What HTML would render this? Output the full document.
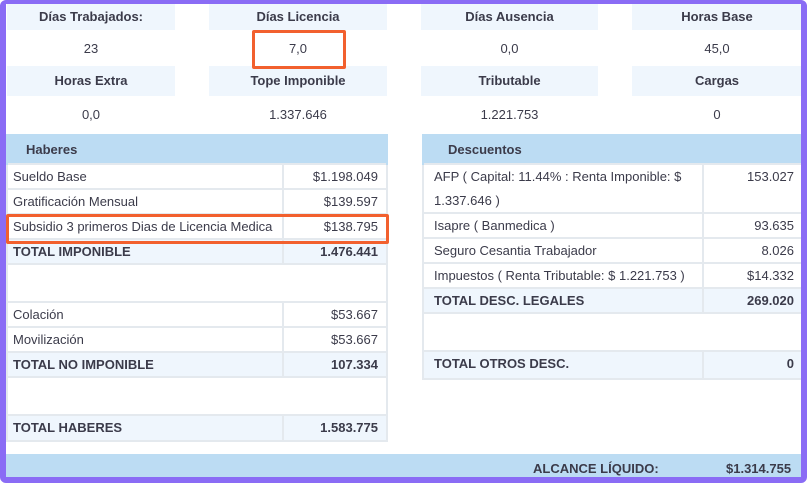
<!DOCTYPE html>
<html><head><meta charset="utf-8"><style>
*{margin:0;padding:0;box-sizing:border-box}
body{width:807px;height:483px;overflow:hidden;background:#fff;font-family:"Liberation Sans",Arial,sans-serif;font-size:13px;color:#3b3b4a;position:relative}
.frame{position:absolute;left:0;top:0;width:807px;height:483px;border:6px solid #8a6cf5;border-top-width:4px;border-radius:6px;z-index:10;pointer-events:none}
.a{position:absolute}
.h{background:#eff6fd;font-weight:bold;text-align:center;line-height:30px}
.v{text-align:center;line-height:37px}
.tbl{position:absolute;border:2px solid #e4e9ee;border-top:none}
.row{position:absolute;left:0;right:0;border-top:2px solid #e4e9ee}
.row .l{position:absolute;left:5px;top:0}
.row .r{position:absolute;right:8px;top:0}
.row .sep{position:absolute;top:0;bottom:0;width:2px;background:#e4e9ee}
.tot{background:#eff6fd;font-weight:bold}
.hd{position:absolute;background:#bcdcf3;font-weight:bold}
.box{position:absolute;border:3px solid #f2602e;border-radius:2px;z-index:5}
</style></head><body>
<div class="frame"></div>
<div class="a h" style="left:7px;top:3px;width:168px;height:27px;line-height:27px">Días Trabajados:</div>
<div class="a h" style="left:209px;top:3px;width:178px;height:27px;line-height:27px">Días Licencia</div>
<div class="a h" style="left:421px;top:3px;width:177px;height:27px;line-height:27px">Días Ausencia</div>
<div class="a h" style="left:632px;top:3px;width:170px;height:27px;line-height:27px">Horas Base</div>
<div class="a v" style="left:7px;top:30px;width:168px">23</div>
<div class="a v" style="left:209px;top:30px;width:178px">7,0</div>
<div class="a v" style="left:421px;top:30px;width:177px">0,0</div>
<div class="a v" style="left:632px;top:30px;width:170px">45,0</div>
<div class="a h" style="left:7px;top:66px;width:168px">Horas Extra</div>
<div class="a h" style="left:209px;top:66px;width:178px">Tope Imponible</div>
<div class="a h" style="left:421px;top:66px;width:177px">Tributable</div>
<div class="a h" style="left:632px;top:66px;width:170px">Cargas</div>
<div class="a v" style="left:7px;top:96px;width:168px">0,0</div>
<div class="a v" style="left:209px;top:96px;width:178px">1.337.646</div>
<div class="a v" style="left:421px;top:96px;width:177px">1.221.753</div>
<div class="a v" style="left:632px;top:96px;width:170px">0</div>
<div class="box" style="left:252px;top:30px;width:94px;height:39px"></div>

<!-- Haberes -->
<div class="hd" style="left:6px;top:134px;width:382px;height:31px;line-height:31px;padding-left:20px">Haberes</div>
<div class="tbl" style="left:6px;top:165px;width:382px;height:277px">
 <div class="row" style="top:-2px;height:26px;line-height:24px"><span class="l">Sueldo Base</span><div class="sep" style="left:274px"></div><span class="r">$1.198.049</span></div>
 <div class="row" style="top:23px;height:26px;line-height:24px"><span class="l">Gratificación Mensual</span><div class="sep" style="left:274px"></div><span class="r">$139.597</span></div>
 <div class="row" style="top:48px;height:26px;line-height:24px"><span class="l">Subsidio 3 primeros Dias de Licencia Medica</span><div class="sep" style="left:274px"></div><span class="r">$138.795</span></div>
 <div class="row tot" style="top:73px;height:26px;line-height:24px"><span class="l">TOTAL IMPONIBLE</span><div class="sep" style="left:274px"></div><span class="r">1.476.441</span></div>
 <div class="row" style="top:98px;height:39px"></div>
 <div class="row" style="top:136px;height:26px;line-height:24px"><span class="l">Colación</span><div class="sep" style="left:274px"></div><span class="r">$53.667</span></div>
 <div class="row" style="top:161px;height:26px;line-height:24px"><span class="l">Movilización</span><div class="sep" style="left:274px"></div><span class="r">$53.667</span></div>
 <div class="row tot" style="top:186px;height:26px;line-height:24px"><span class="l">TOTAL NO IMPONIBLE</span><div class="sep" style="left:274px"></div><span class="r">107.334</span></div>
 <div class="row" style="top:211px;height:39px"></div>
 <div class="row tot" style="top:249px;height:26px;line-height:24px"><span class="l">TOTAL HABERES</span><div class="sep" style="left:274px"></div><span class="r">1.583.775</span></div>
</div>
<div class="box" style="left:6px;top:214px;width:383px;height:30px"></div>

<!-- Descuentos -->
<div class="hd" style="left:422px;top:134px;width:380px;height:31px;line-height:31px;padding-left:26px">Descuentos</div>
<div class="tbl" style="left:422px;top:165px;width:380px;height:215px;border-right:none">
 <div class="row" style="top:-2px;height:50px;line-height:24px"><span class="l" style="left:10px">AFP ( Capital: 11.44% : Renta Imponible: $<br>1.337.646 )</span><div class="sep" style="left:278px"></div><span class="r">153.027</span></div>
 <div class="row" style="top:47px;height:26px;line-height:24px"><span class="l" style="left:10px">Isapre ( Banmedica )</span><div class="sep" style="left:278px"></div><span class="r">93.635</span></div>
 <div class="row" style="top:72px;height:26px;line-height:24px"><span class="l" style="left:10px">Seguro Cesantia Trabajador</span><div class="sep" style="left:278px"></div><span class="r">8.026</span></div>
 <div class="row" style="top:97px;height:26px;line-height:24px"><span class="l" style="left:10px">Impuestos ( Renta Tributable: $ 1.221.753 )</span><div class="sep" style="left:278px"></div><span class="r">$14.332</span></div>
 <div class="row tot" style="top:122px;height:26px;line-height:24px"><span class="l" style="left:10px">TOTAL DESC. LEGALES</span><div class="sep" style="left:278px"></div><span class="r">269.020</span></div>
 <div class="row" style="top:147px;height:39px"></div>
 <div class="row tot" style="top:185px;height:28px;line-height:24px"><span class="l" style="left:10px">TOTAL OTROS DESC.</span><div class="sep" style="left:278px"></div><span class="r">0</span></div>
</div>

<div class="hd" style="left:6px;top:454px;width:796px;height:26px;line-height:26px">
 <span class="a" style="left:527px;top:2px">ALCANCE LÍQUIDO:</span>
 <span class="a" style="left:720px;top:2px">$1.314.755</span>
</div>
</body></html>
